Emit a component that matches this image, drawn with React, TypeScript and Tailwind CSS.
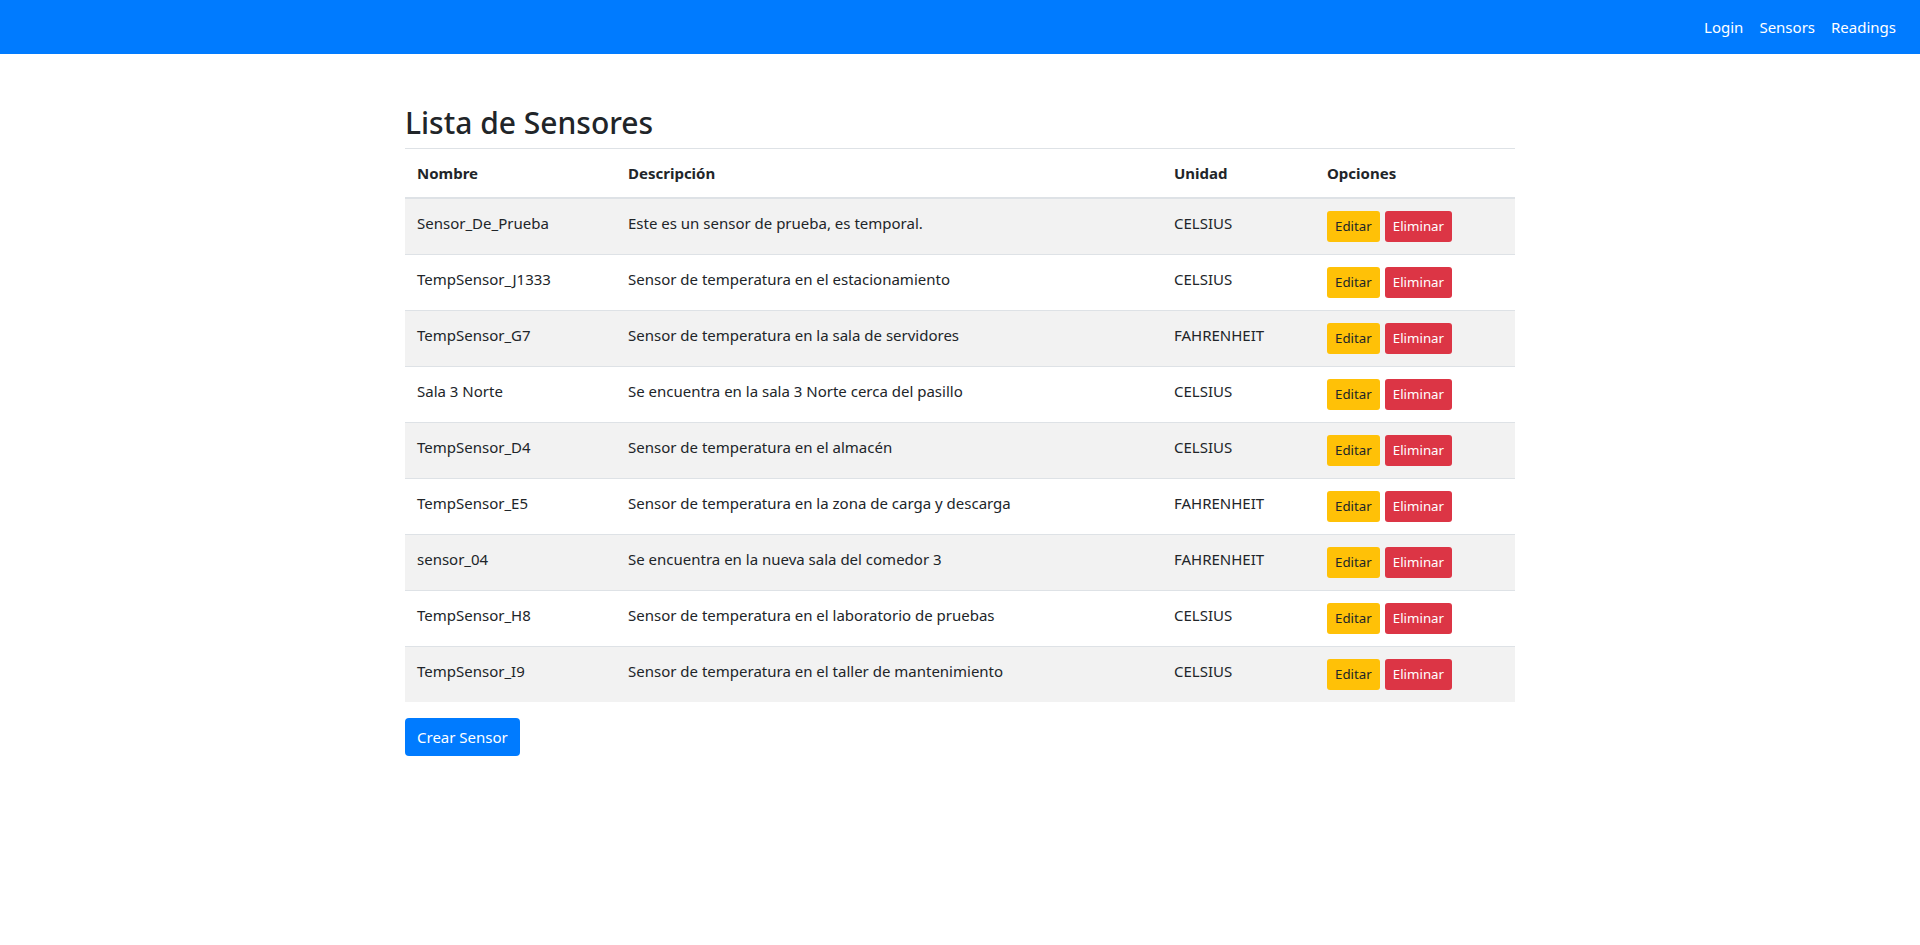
import React from "react";

const sensors = [
  ["Sensor_De_Prueba", "Este es un sensor de prueba, es temporal.", "CELSIUS"],
  ["TempSensor_J1333", "Sensor de temperatura en el estacionamiento", "CELSIUS"],
  ["TempSensor_G7", "Sensor de temperatura en la sala de servidores", "FAHRENHEIT"],
  ["Sala 3 Norte", "Se encuentra en la sala 3 Norte cerca del pasillo", "CELSIUS"],
  ["TempSensor_D4", "Sensor de temperatura en el almacén", "CELSIUS"],
  ["TempSensor_E5", "Sensor de temperatura en la zona de carga y descarga", "FAHRENHEIT"],
  ["sensor_04", "Se encuentra en la nueva sala del comedor 3", "FAHRENHEIT"],
  ["TempSensor_H8", "Sensor de temperatura en el laboratorio de pruebas", "CELSIUS"],
  ["TempSensor_I9", "Sensor de temperatura en el taller de mantenimiento", "CELSIUS"],
];

export default function App() {
  return (
    <div
      className="min-h-[945px] bg-white text-[#212529] text-[15px] leading-[24px]"
      style={{ fontFamily: '"Noto Sans", "Liberation Sans", sans-serif' }}
    >
      <nav className="h-[54px] bg-[#007bff] flex items-center justify-end px-4">
        <a className="px-2 text-white">Login</a>
        <a className="px-2 text-white">Sensors</a>
        <a className="px-2 text-white">Readings</a>
      </nav>
      <div className="w-[1140px] mx-auto px-[15px]">
        <h2 className="mt-[50px] mb-[6px] text-[30px] leading-[38.4px] font-medium">Lista de Sensores</h2>
        <table className="w-full border-collapse mb-4">
          <thead>
            <tr>
              <th className="w-[211px] text-left font-bold p-3 border-t border-b-2 border-[#dee2e6] align-bottom">Nombre</th>
              <th className="w-[546px] text-left font-bold p-3 border-t border-b-2 border-[#dee2e6] align-bottom">Descripción</th>
              <th className="w-[153px] text-left font-bold p-3 border-t border-b-2 border-[#dee2e6] align-bottom">Unidad</th>
              <th className="text-left font-bold p-3 border-t border-b-2 border-[#dee2e6] align-bottom">Opciones</th>
            </tr>
          </thead>
          <tbody>
            {sensors.map((s, i) => (
              <tr key={i} className={i % 2 === 0 ? "bg-[#f2f2f2]" : ""}>
                <td className="p-3 border-t border-[#dee2e6] align-top">{s[0]}</td>
                <td className="p-3 border-t border-[#dee2e6] align-top">{s[1]}</td>
                <td className="p-3 border-t border-[#dee2e6] align-top">{s[2]}</td>
                <td className="p-3 border-t border-[#dee2e6] align-top">
                  <div className="flex gap-[5px]">
                    <button className="h-[31px] px-2 text-[13.3px] leading-[21px] rounded-[3px] bg-[#ffc107] text-[#212529]">Editar</button>
                    <button className="h-[31px] px-2 text-[13.3px] leading-[21px] rounded-[3px] bg-[#dc3545] text-white">Eliminar</button>
                  </div>
                </td>
              </tr>
            ))}
          </tbody>
        </table>
        <button className="h-[38px] px-3 rounded-[4px] bg-[#007bff] text-white text-[15px]">Crear Sensor</button>
      </div>
    </div>
  );
}
